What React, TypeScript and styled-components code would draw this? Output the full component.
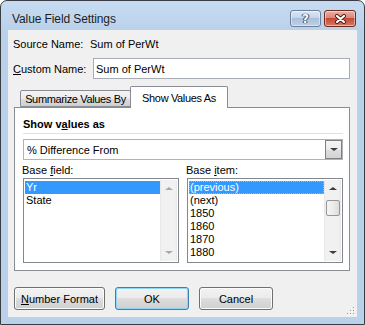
import React from "react";
import styled, { createGlobalStyle } from "styled-components";

const GlobalStyle = createGlobalStyle`
  html, body {
    margin: 0;
    padding: 0;
    background: #ffffff;
  }
  body {
    font-family: "Liberation Sans", Arial, sans-serif;
    font-size: 11px;
    color: #000;
  }
`;

const Window = styled.div`
  width: 365px;
  height: 325px;
  box-sizing: border-box;
  border: 1px solid #3a3e44;
  border-radius: 7px 7px 0 0;
  background: linear-gradient(#c7dcf2, #b9d1ea 30px, #b9d1ea);
  padding: 0 7px 7px;
  display: flex;
  flex-direction: column;
`;

const TitleBar = styled.div`
  height: 29px;
  display: flex;
  align-items: flex-start;
  flex-shrink: 0;
`;

const TitleText = styled.div`
  margin: 11px 0 0 4px;
  font-size: 12px;
  line-height: 14px;
  letter-spacing: -0.1px;
  color: #1e1e1e;
`;

const CaptionGroup = styled.div`
  margin: 9px 1px 0 auto;
  display: flex;
  gap: 3px;
`;

const CaptionButton = styled.div<{ $close?: boolean }>`
  width: ${(p) => (p.$close ? 32 : 31)}px;
  height: 17px;
  box-sizing: border-box;
  border: 1px solid ${(p) => (p.$close ? "#6e2a1f" : "#6c7f99")};
  border-radius: 3px;
  background: ${(p) =>
    p.$close
      ? "linear-gradient(#ebb2a5, #d9877a 45%, #c44a33 50%, #d57a66)"
      : "linear-gradient(#dde7f3, #c5d5e9 45%, #a9c0dc 50%, #bcd0e7)"};
  box-shadow: inset 0 0 0 1px rgba(255, 255, 255, 0.45);
  display: flex;
  align-items: center;
  justify-content: center;
`;

const HelpGlyph = styled.span`
  font-family: "DejaVu Sans", sans-serif;
  font-weight: bold;
  font-size: 12px;
  line-height: 12px;
  color: #fff;
  text-shadow: 0 0 1px #2b3a50, 0 0 1px #2b3a50, 1px 0 0 #4a5a70, -1px 0 0 #4a5a70;
`;

const Client = styled.div`
  position: relative;
  flex: 1;
  background: #f0f0f0;
  padding: 7px 7px 0 5px;
  display: flex;
  flex-direction: column;
`;

const InfoRow = styled.div`
  display: flex;
  align-items: center;
  height: 14px;
`;

const FieldRow = styled.div`
  display: flex;
  align-items: center;
  height: 21px;
  margin-top: 7px;
`;

const RowLabel = styled.div<{ $w: number }>`
  width: ${(p) => p.$w}px;
  flex-shrink: 0;
  line-height: 14px;
`;

const Key = styled.span`
  text-decoration: underline;
`;

const TextBox = styled.div`
  width: 257px;
  height: 21px;
  box-sizing: border-box;
  border: 1px solid #a6adb6;
  background: #fff;
  padding-left: 2px;
  display: flex;
  align-items: center;
`;

const TabArea = styled.div`
  margin: 7px 0 0 1px;
  display: flex;
  flex-direction: column;
`;

const TabStrip = styled.div`
  height: 21px;
  padding-left: 6px;
  display: flex;
  align-items: flex-end;
`;

const Tab = styled.div<{ $active?: boolean }>`
  position: relative;
  z-index: ${(p) => (p.$active ? 1 : 0)};
  box-sizing: border-box;
  width: ${(p) => (p.$active ? 98 : 111)}px;
  height: ${(p) => (p.$active ? 22 : 17)}px;
  margin-left: ${(p) => (p.$active ? -1 : 0)}px;
  margin-bottom: ${(p) => (p.$active ? -1 : 0)}px;
  border: 1px solid #898c95;
  border-bottom: ${(p) => (p.$active ? "none" : "1px solid #898c95")};
  border-radius: 2px 2px 0 0;
  background: ${(p) =>
    p.$active
      ? "#fff"
      : "linear-gradient(#f3f3f3, #ebebeb 50%, #dddddd 50%, #cfcfcf)"};
  display: flex;
  align-items: center;
  justify-content: center;
  padding-top: ${(p) => (p.$active ? 0 : 1)}px;
  letter-spacing: -0.35px;
  white-space: nowrap;
`;

const Panel = styled.div`
  height: 164px;
  box-sizing: border-box;
  border: 1px solid #898c95;
  background: #fff;
  padding: 9px 6px 7px 8px;
  display: flex;
  flex-direction: column;
`;

const Heading = styled.div`
  font-weight: bold;
  line-height: 14px;
`;

const Separator = styled.div`
  margin-top: 2px;
  height: 1px;
  background: #dde2e7;
`;

const DropDown = styled.div`
  margin-top: 5px;
  height: 21px;
  box-sizing: border-box;
  border: 1px solid #b0b3b8;
  background: #fff;
  display: flex;
  align-items: center;
  padding-left: 3px;
`;

const DropButton = styled.div`
  margin-left: auto;
  width: 17px;
  height: 19px;
  box-sizing: border-box;
  border: 1px solid #7d8087;
  background: linear-gradient(#f4f4f4, #ececec 50%, #dedede 50%, #d3d3d3);
  display: flex;
  align-items: center;
  justify-content: center;
`;

const Triangle = styled.div<{ $up?: boolean; $dim?: boolean; $size?: number }>`
  width: 0;
  height: 0;
  border-left: ${(p) => p.$size ?? 4}px solid transparent;
  border-right: ${(p) => p.$size ?? 4}px solid transparent;
  ${(p) => (p.$up ? "border-bottom" : "border-top")}: ${(p) =>
      (p.$size ?? 4) - 1}px solid ${(p) => (p.$dim ? "#a8a8a8" : "#3c3c3c")};
`;

const PairGrid = styled.div<{ $top: number }>`
  margin-top: ${(p) => p.$top}px;
  display: grid;
  grid-template-columns: 156px 156px;
  column-gap: 8px;
`;

const SubLabel = styled.div`
  line-height: 14px;
  margin-left: -1px;
`;

const ListBox = styled.div`
  height: 85px;
  box-sizing: border-box;
  border: 1px solid #828790;
  background: #fff;
  padding: 1px;
  display: flex;
`;

const Items = styled.div`
  flex: 1;
  padding-top: 1px;
  overflow: hidden;
`;

const Item = styled.div<{ $selected?: boolean; $focus?: boolean }>`
  height: 13px;
  line-height: 13px;
  padding-left: 1px;
  white-space: nowrap;
  background: ${(p) => (p.$selected ? "#3399ff" : "transparent")};
  color: ${(p) => (p.$selected ? "#fff" : "#000")};
  outline: ${(p) => (p.$focus ? "1px dotted #f6a34c" : "none")};
  outline-offset: -1px;
`;

const ScrollBar = styled.div`
  width: 17px;
  display: flex;
  flex-direction: column;
  background: linear-gradient(90deg, #e6e6e6, #f1f1f1 2px, #f1f1f1 15px, #e6e6e6);
`;

const ScrollArrow = styled.div`
  height: 17px;
  display: flex;
  align-items: center;
  justify-content: center;
`;

const ScrollTrack = styled.div`
  flex: 1;
  padding: 3px 1px 0 2px;
`;

const Thumb = styled.div`
  height: 16px;
  box-sizing: border-box;
  border: 1px solid #979797;
  border-radius: 2px;
  background: linear-gradient(90deg, #f4f4f4, #ececec 50%, #dcdcdc);
`;

const ButtonRow = styled.div`
  margin: 16px 0 0 1px;
  display: flex;
`;

const Button = styled.div<{ $w: number; $default?: boolean }>`
  width: ${(p) => p.$w}px;
  height: 23px;
  box-sizing: border-box;
  border: 1px solid ${(p) => (p.$default ? "#3c7fb1" : "#707070")};
  border-radius: 3px;
  background: linear-gradient(#f2f2f2, #ebebeb 50%, #dddddd 50%, #cfcfcf);
  box-shadow: inset 0 0 0 1px ${(p) => (p.$default ? "#8fd6f5" : "#fbfbfb")};
  display: flex;
  align-items: center;
  justify-content: center;
  &:nth-child(2) {
    margin-left: auto;
  }
  & + & {
    margin-left: 10px;
  }
`;

const Grip = styled.svg`
  position: absolute;
  right: 1px;
  bottom: 1px;
`;

const CloseGlyph = () => (
  <svg width="13" height="10" viewBox="0 0 13 10">
    <path d="M3 2 L10 8 M10 2 L3 8" stroke="#4a1a12" strokeWidth="4" strokeLinecap="round" />
    <path d="M3 2 L10 8 M10 2 L3 8" stroke="#ffffff" strokeWidth="2.2" strokeLinecap="round" />
  </svg>
);

const Scroll = ({ dim, thumb }: { dim?: boolean; thumb?: boolean }) => (
  <ScrollBar>
    <ScrollArrow>
      <Triangle $up $dim={dim} />
    </ScrollArrow>
    <ScrollTrack>{thumb && <Thumb />}</ScrollTrack>
    <ScrollArrow>
      <Triangle $dim={dim} />
    </ScrollArrow>
  </ScrollBar>
);

const baseItems = ["(previous)", "(next)", "1850", "1860", "1870", "1880"];

export default function App() {
  return (
    <>
      <GlobalStyle />
      <Window>
        <TitleBar>
          <TitleText>Value Field Settings</TitleText>
          <CaptionGroup>
            <CaptionButton>
              <HelpGlyph>?</HelpGlyph>
            </CaptionButton>
            <CaptionButton $close>
              <CloseGlyph />
            </CaptionButton>
          </CaptionGroup>
        </TitleBar>
        <Client>
          <InfoRow>
            <RowLabel $w={77}>Source Name:</RowLabel>
            <span>Sum of PerWt</span>
          </InfoRow>
          <FieldRow>
            <RowLabel $w={80}>
              <Key>C</Key>ustom Name:
            </RowLabel>
            <TextBox>Sum of PerWt</TextBox>
          </FieldRow>
          <TabArea>
            <TabStrip>
              <Tab>Summarize Values By</Tab>
              <Tab $active>Show Values As</Tab>
            </TabStrip>
            <Panel>
              <Heading>
                Show v<Key>a</Key>lues as
              </Heading>
              <Separator />
              <DropDown>
                % Difference From
                <DropButton>
                  <Triangle />
                </DropButton>
              </DropDown>
              <PairGrid $top={3}>
                <SubLabel>
                  Base <Key>f</Key>ield:
                </SubLabel>
                <SubLabel>
                  Base <Key>i</Key>tem:
                </SubLabel>
              </PairGrid>
              <PairGrid $top={1}>
                <ListBox>
                  <Items>
                    <Item $selected>Yr</Item>
                    <Item>State</Item>
                  </Items>
                  <Scroll dim />
                </ListBox>
                <ListBox>
                  <Items>
                    {baseItems.map((it, i) => (
                      <Item key={it} $selected={i === 0} $focus={i === 0}>
                        {it}
                      </Item>
                    ))}
                  </Items>
                  <Scroll thumb />
                </ListBox>
              </PairGrid>
            </Panel>
          </TabArea>
          <ButtonRow>
            <Button $w={91}>
              <span>
                <Key>N</Key>umber Format
              </span>
            </Button>
            <Button $w={74} $default>
              OK
            </Button>
            <Button $w={74}>Cancel</Button>
          </ButtonRow>
          <Grip width="10" height="10" viewBox="0 0 10 10">
            {[
              [8, 2], [8, 5], [5, 5], [8, 8], [5, 8], [2, 8],
            ].map(([x, y]) => (
              <g key={`${x}-${y}`}>
                <rect x={x} y={y} width="1" height="1" fill="#fff" />
                <rect x={x - 1} y={y - 1} width="1" height="1" fill="#9a9a9a" />
              </g>
            ))}
          </Grip>
        </Client>
      </Window>
    </>
  );
}
